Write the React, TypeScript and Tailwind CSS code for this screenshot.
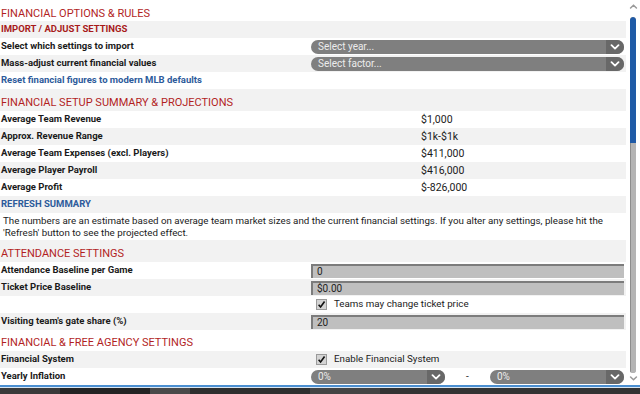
import React from 'react';

const font = { fontFamily: 'Roboto, "Liberation Sans", sans-serif' };

const Chevron = ({ className }: { className?: string }) => (
  <svg viewBox="0 0 10 6" className={className} fill="none" stroke="currentColor" strokeWidth="1.8" strokeLinecap="round" strokeLinejoin="round">
    <path d="M1.5 1.2 L5 4.6 L8.5 1.2" />
  </svg>
);

const Select = ({ label, className }: { label: string; className: string }) => (
  <div className={`flex h-[14px] items-stretch overflow-hidden rounded-full bg-[#7f7f7f] ${className}`}>
    <span className="flex-1 pl-[7px] text-[10px] leading-[14px] text-[#ececec]">{label}</span>
    <span className="flex w-[18px] items-center justify-center bg-[#686868] text-white">
      <Chevron className="h-[6px] w-[10px]" />
    </span>
  </div>
);

const Input = ({ value }: { value: string }) => (
  <div className="ml-[311px] h-[14px] w-[313px] border-l-2 border-t-2 border-[#7c7c7c] bg-[#bfbfbf] pl-[4px] text-[10px] leading-[12px] text-[#222]">
    {value}
  </div>
);

const Checkbox = ({ label }: { label: string }) => (
  <div className="ml-[316px] flex items-center gap-[7px]">
    <span className="flex h-[11px] w-[11px] items-center justify-center border border-[#9a9a9a] bg-[#d4d4d4] text-[#111]">
      <svg viewBox="0 0 10 10" className="h-[9px] w-[9px]" fill="none" stroke="currentColor" strokeWidth="1.8">
        <path d="M1.8 5.2 L4 7.8 L8.4 1.6" />
      </svg>
    </span>
    <span className="text-[9.75px] text-[#1a1a1a]">{label}</span>
  </div>
);

type Row =
  | { kind: 'title'; text: string; h?: string }
  | { kind: 'sub'; text: string; color?: string }
  | { kind: 'label'; text: string; value?: string; control?: React.ReactNode }
  | { kind: 'control'; control: React.ReactNode }
  | { kind: 'para'; lines: string[] };

const rows: Row[] = [
  { kind: 'title', text: 'FINANCIAL OPTIONS & RULES', h: 'h-[21px] pb-[1px]' },
  { kind: 'sub', text: 'IMPORT / ADJUST SETTINGS' },
  { kind: 'label', text: 'Select which settings to import', control: <Select label="Select year..." className="ml-auto mr-[2px] w-[313px]" /> },
  { kind: 'label', text: 'Mass-adjust current financial values', control: <Select label="Select factor..." className="ml-auto mr-[2px] w-[313px]" /> },
  { kind: 'sub', text: 'Reset financial figures to modern MLB defaults', color: 'text-[#2d5b9b]' },
  { kind: 'title', text: 'FINANCIAL SETUP SUMMARY & PROJECTIONS' },
  { kind: 'label', text: 'Average Team Revenue', value: '$1,000' },
  { kind: 'label', text: 'Approx. Revenue Range', value: '$1k-$1k' },
  { kind: 'label', text: 'Average Team Expenses (excl. Players)', value: '$411,000' },
  { kind: 'label', text: 'Average Player Payroll', value: '$416,000' },
  { kind: 'label', text: 'Average Profit', value: '$-826,000' },
  { kind: 'sub', text: 'REFRESH SUMMARY', color: 'text-[#2d5b9b]' },
  {
    kind: 'para',
    lines: [
      'The numbers are an estimate based on average team market sizes and the current financial settings. If you alter any settings, please hit the',
      "'Refresh' button to see the projected effect.",
    ],
  },
  { kind: 'title', text: 'ATTENDANCE SETTINGS' },
  { kind: 'label', text: 'Attendance Baseline per Game', control: <Input value="0" /> },
  { kind: 'label', text: 'Ticket Price Baseline', control: <Input value="$0.00" /> },
  { kind: 'control', control: <Checkbox label="Teams may change ticket price" /> },
  { kind: 'label', text: "Visiting team's gate share (%)", control: <Input value="20" /> },
  { kind: 'title', text: 'FINANCIAL & FREE AGENCY SETTINGS', h: 'h-[21px] pb-[2px]' },
  { kind: 'label', text: 'Financial System', control: <Checkbox label="Enable Financial System" /> },
  {
    kind: 'label',
    text: 'Yearly Inflation',
    control: (
      <div className="ml-[311px] flex items-center">
        <Select label="0%" className="w-[134px]" />
        <span className="w-[45px] text-center text-[10px] text-[#333]">-</span>
        <Select label="0%" className="w-[134px]" />
      </div>
    ),
  },
];

const renderRow = (row: Row, i: number) => {
  const bg = i % 2 === 1 ? 'bg-[#f2f2f2]' : 'bg-white';
  switch (row.kind) {
    case 'title':
      return (
        <div key={i} className={`${bg} flex ${row.h ?? 'h-[22px] pb-[2px]'} items-end pl-[1px] text-[11px] leading-[13px] text-[#b21f1f]`}>
          {row.text}
        </div>
      );
    case 'sub':
      return (
        <div key={i} className={`${bg} flex h-[17px] items-center pl-[1px] text-[9.5px] font-bold ${row.color ?? 'text-[#a81a1a]'}`}>
          {row.text}
        </div>
      );
    case 'para':
      return (
        <div key={i} className={`${bg} h-[27px] pl-[3px] pt-[2px] text-[9.75px] leading-[11.5px] whitespace-nowrap text-[#1a1a1a]`}>
          {row.lines.map((line) => (
            <div key={line}>{line}</div>
          ))}
        </div>
      );
    case 'control':
      return (
        <div key={i} className={`${bg} flex h-[17px] items-center`}>
          {row.control}
        </div>
      );
    default:
      return (
        <div key={i} className={`${bg} relative flex h-[17px] items-center`}>
          <span className="absolute left-[1px] text-[9.5px] font-bold text-[#1a1a1a]">{row.text}</span>
          {row.value && <span className="ml-[421px] text-[10.5px] text-[#1a1a1a]">{row.value}</span>}
          {row.control}
        </div>
      );
  }
};

export default function App() {
  return (
    <div className="flex h-[394px] w-[640px] flex-col overflow-hidden bg-white" style={font}>
      <div className="flex h-[385px]">
        <div className="w-[626px]">{rows.map(renderRow)}</div>
        <div className="flex w-[14px] flex-col items-center pt-[4px]">
          <Chevron className="h-[5px] w-[9px] rotate-180 text-[#999]" />
          <div className="mt-[8px] flex h-[356px] w-[6px] flex-col overflow-hidden rounded-full bg-[#a9a9a9]">
            <div className="h-[126px] w-full rounded-t-full bg-[#1f5aa6]" />
            <div className="flex-1 border-l border-[#8d8d8d] bg-[#b4b4b4]" />
          </div>
          <Chevron className="mt-[3px] h-[5px] w-[9px] text-[#999]" />
        </div>
      </div>
      <div className="h-[2px] bg-[#4b8fd1]" />
      <div className="h-[1px] bg-[#d9e6f2]" />
      <div className="flex flex-1 bg-[#2a2a2a]">
        <div className="w-[60px] bg-[#3a3a3a]" />
        <div className="w-[90px] bg-[#242424]" />
        <div className="w-[40px] bg-[#4a4a4a]" />
        <div className="w-[120px] bg-[#2e2e2e]" />
        <div className="w-[70px] bg-[#444]" />
        <div className="flex-1 bg-[#333]" />
      </div>
    </div>
  );
}
